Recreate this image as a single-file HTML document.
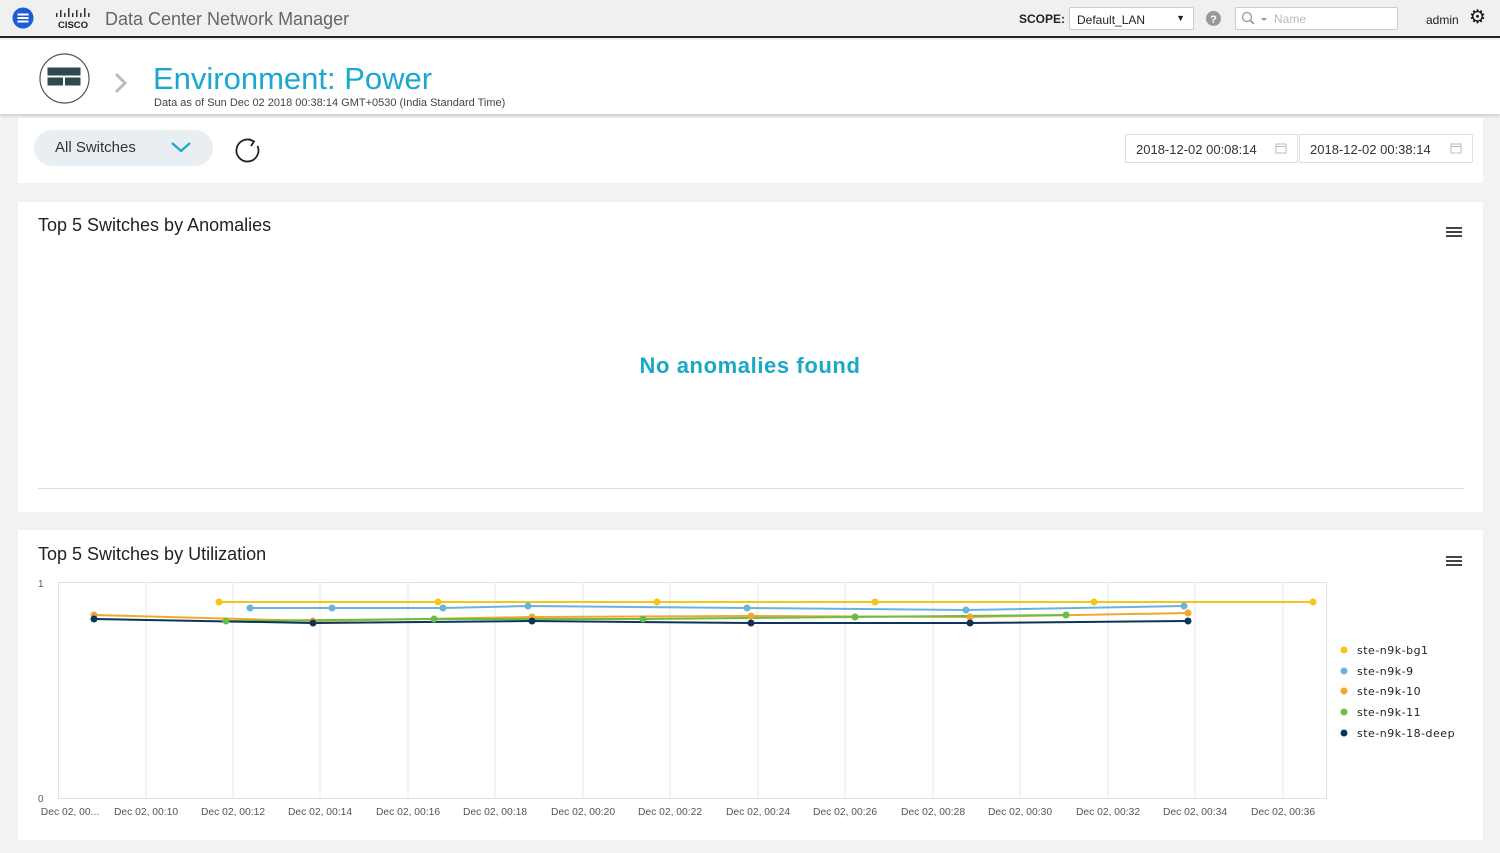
<!DOCTYPE html>
<html><head><meta charset="utf-8"><style>
*{margin:0;padding:0;box-sizing:border-box}
body{width:1500px;height:853px;background:#f2f2f2;font-family:"Liberation Sans",sans-serif;position:relative;overflow:hidden;color:#333}
.a{position:absolute}
.card{position:absolute;background:#fff;left:18px;width:1465px}
</style></head><body>
<div class="a" style="left:0;top:0;width:1500px;height:38px;background:#f0f0f0;border-bottom:2px solid #222"></div>
<svg class="a" style="left:12px;top:7px" width="22" height="22"><circle cx="11" cy="11" r="10.5" fill="#1e5bd6"/><rect x="5.5" y="6.5" width="11" height="2" fill="#fff"/><rect x="5.5" y="10" width="11" height="2" fill="#fff"/><rect x="5.5" y="13.5" width="11" height="2" fill="#fff"/></svg>
<svg class="a" style="left:54px;top:8px" width="40" height="22"><g fill="#333"><rect x="2" y="5" width="1.5" height="4"/><rect x="6" y="2" width="1.5" height="7"/><rect x="10" y="5" width="1.5" height="4"/><rect x="14" y="0" width="1.5" height="9"/><rect x="18" y="5" width="1.5" height="4"/><rect x="22" y="2" width="1.5" height="7"/><rect x="26" y="5" width="1.5" height="4"/><rect x="30" y="0" width="1.5" height="9"/><rect x="34" y="5" width="1.5" height="4"/></g><text x="19" y="20" font-size="9.5" font-weight="bold" text-anchor="middle" fill="#222" font-family="Liberation Sans">CISCO</text></svg>
<div class="a" style="left:105px;top:9px;font-size:18px;color:#666">Data Center Network Manager</div>
<div class="a" style="left:1019px;top:12px;font-size:12px;font-weight:bold;color:#222">SCOPE:</div>
<div class="a" style="left:1069px;top:7px;width:125px;height:23px;background:#fff;border:1px solid #ccc;border-radius:2px;font-size:12px;padding:5px 7px;color:#222">Default_LAN<span style="position:absolute;right:8px;top:5px;font-size:9px">▼</span></div>
<svg class="a" style="left:1206px;top:11px" width="15" height="15"><circle cx="7.5" cy="7.5" r="7.5" fill="#999"/><text x="7.5" y="12" font-size="11" font-weight="bold" fill="#fff" text-anchor="middle" font-family="Liberation Sans">?</text></svg>
<div class="a" style="left:1235px;top:7px;width:163px;height:23px;background:#fff;border:1px solid #ccc;border-radius:2px"></div>
<svg class="a" style="left:1241px;top:11px" width="30" height="15"><circle cx="6" cy="6" r="4.5" fill="none" stroke="#999" stroke-width="1.3"/><line x1="9" y1="9" x2="13" y2="13" stroke="#999" stroke-width="1.8"/><path d="M20 7 L26 7 L23 10 Z" fill="#999"/></svg>
<div class="a" style="left:1274px;top:12px;font-size:12px;color:#bbb">Name</div>
<div class="a" style="left:1426px;top:13px;font-size:12px;color:#222">admin</div>
<div class="a" style="left:1469px;top:6px;font-size:19px;color:#111">⚙</div>
<div class="a" style="left:0;top:40px;width:1500px;height:74px;background:#fff;box-shadow:0 2px 3px rgba(0,0,0,.15)"></div>
<svg class="a" style="left:38px;top:52px" width="53" height="53"><circle cx="26.5" cy="26.5" r="24.5" fill="#fff" stroke="#555" stroke-width="1.2"/><rect x="9.5" y="15.5" width="33" height="8" fill="#2c4a4f"/><rect x="9.5" y="25.5" width="15.5" height="8" fill="#2c4a4f"/><rect x="27" y="25.5" width="15.5" height="8" fill="#2c4a4f"/></svg>
<svg class="a" style="left:113px;top:71px" width="16" height="24"><path d="M3 3 L12 12 L3 21" fill="none" stroke="#bbb" stroke-width="3"/></svg>
<div class="a" style="left:153px;top:61px;font-size:31px;color:#1aa8d0">Environment: Power</div>
<div class="a" style="left:154px;top:97px;font-size:11px;color:#444">Data as of Sun Dec 02 2018 00:38:14 GMT+0530 (India Standard Time)</div>
<div class="card" style="top:118px;height:65px"></div>
<div class="a" style="left:34px;top:130px;width:179px;height:36px;background:#e8eef1;border-radius:18px"></div>
<div class="a" style="left:55px;top:139px;font-size:15px;color:#333">All Switches</div>
<svg class="a" style="left:170px;top:140px" width="22" height="14"><path d="M2 3 L11 11 L20 3" fill="none" stroke="#1aa8d0" stroke-width="2.2"/></svg>
<svg class="a" style="left:233px;top:135px" width="30" height="30"><path d="M20 6 A11 11 0 1 0 24.5 11" fill="none" stroke="#222" stroke-width="1.8"/><path d="M16 4 L21 6.5 L18 11" fill="none" stroke="#222" stroke-width="1.8"/></svg>
<div class="a" style="left:1125px;top:134px;width:173px;height:29px;border:1px solid #ddd;border-radius:2px;font-size:13px;color:#333;padding:7px 10px">2018-12-02 00:08:14</div>
<div class="a" style="left:1299px;top:134px;width:174px;height:29px;border:1px solid #ddd;border-radius:2px;font-size:13px;color:#333;padding:7px 10px">2018-12-02 00:38:14</div>
<svg class="a" style="left:1275px;top:142px" width="12" height="12"><rect x="1" y="2" width="10" height="9" fill="none" stroke="#bbb"/><line x1="1" y1="4.5" x2="11" y2="4.5" stroke="#bbb"/></svg>
<svg class="a" style="left:1450px;top:142px" width="12" height="12"><rect x="1" y="2" width="10" height="9" fill="none" stroke="#bbb"/><line x1="1" y1="4.5" x2="11" y2="4.5" stroke="#bbb"/></svg>
<div class="card" style="top:202px;height:310px"></div>
<div class="a" style="left:38px;top:215px;font-size:18px;color:#222">Top 5 Switches by Anomalies</div>
<svg class="a" style="left:1446px;top:226px" width="16" height="12"><g fill="#444"><rect y="1" width="16" height="2"/><rect y="5" width="16" height="2"/><rect y="9" width="16" height="2"/></g></svg>
<div class="a" style="left:0;width:1500px;top:353px;text-align:center;font-size:22px;font-weight:bold;color:#1aa8c8;letter-spacing:.6px">No anomalies found</div>
<div class="a" style="left:38px;top:488px;width:1426px;height:1px;background:#ddd"></div>
<div class="card" style="top:530px;height:310px"></div>
<div class="a" style="left:38px;top:544px;font-size:18px;color:#222">Top 5 Switches by Utilization</div>
<svg class="a" style="left:1446px;top:555px" width="16" height="12"><g fill="#444"><rect y="1" width="16" height="2"/><rect y="5" width="16" height="2"/><rect y="9" width="16" height="2"/></g></svg>
<svg class="a" style="left:0;top:570px" width="1500" height="260" font-family="Liberation Sans">
<g transform="translate(0,-570)">
<rect x="58.5" y="582.5" width="1268" height="216" fill="#fff" stroke="#dde3ea"/>
<g stroke="#e3e7ec">
<line x1="146" y1="582" x2="146" y2="798"/><line x1="233" y1="582" x2="233" y2="798"/><line x1="320" y1="582" x2="320" y2="798"/><line x1="408" y1="582" x2="408" y2="798"/><line x1="495" y1="582" x2="495" y2="798"/><line x1="583" y1="582" x2="583" y2="798"/><line x1="670" y1="582" x2="670" y2="798"/><line x1="758" y1="582" x2="758" y2="798"/><line x1="845" y1="582" x2="845" y2="798"/><line x1="933" y1="582" x2="933" y2="798"/><line x1="1020" y1="582" x2="1020" y2="798"/><line x1="1108" y1="582" x2="1108" y2="798"/><line x1="1195" y1="582" x2="1195" y2="798"/><line x1="1283" y1="582" x2="1283" y2="798"/>
</g>
<text x="38" y="587" font-size="10" fill="#555">1</text><text x="38" y="802" font-size="10" fill="#555">0</text>
<g font-size="10.3" fill="#555" text-anchor="middle">
<text x="70" y="815">Dec 02, 00...</text><text x="146" y="815">Dec 02, 00:10</text><text x="233" y="815">Dec 02, 00:12</text><text x="320" y="815">Dec 02, 00:14</text><text x="408" y="815">Dec 02, 00:16</text><text x="495" y="815">Dec 02, 00:18</text><text x="583" y="815">Dec 02, 00:20</text><text x="670" y="815">Dec 02, 00:22</text><text x="758" y="815">Dec 02, 00:24</text><text x="845" y="815">Dec 02, 00:26</text><text x="933" y="815">Dec 02, 00:28</text><text x="1020" y="815">Dec 02, 00:30</text><text x="1108" y="815">Dec 02, 00:32</text><text x="1195" y="815">Dec 02, 00:34</text><text x="1283" y="815">Dec 02, 00:36</text>
</g>
<g fill="none" stroke-width="2">
<polyline stroke="#f5c518" points="219,602 438,602 657,602 875,602 1094,602 1313,602"/>
<polyline stroke="#6ab4dc" points="250,608 332,608 443,608 528,606 747,608 966,610 1184,606"/>
<polyline stroke="#f0a830" points="94,615 313,621 532,617 751,616 970,617 1188,613"/>
<polyline stroke="#6cbd45" points="226,621 434,619 643,619 855,617 1066,615"/>
<polyline stroke="#0c3558" points="94,619 313,623 532,621 751,623 970,623 1188,621"/>
</g>
<g fill="#f5c518"><circle cx="219" cy="602" r="3.5"/><circle cx="438" cy="602" r="3.5"/><circle cx="657" cy="602" r="3.5"/><circle cx="875" cy="602" r="3.5"/><circle cx="1094" cy="602" r="3.5"/><circle cx="1313" cy="602" r="3.5"/></g>
<g fill="#6ab4dc"><circle cx="250" cy="608" r="3.5"/><circle cx="332" cy="608" r="3.5"/><circle cx="443" cy="608" r="3.5"/><circle cx="528" cy="606" r="3.5"/><circle cx="747" cy="608" r="3.5"/><circle cx="966" cy="610" r="3.5"/><circle cx="1184" cy="606" r="3.5"/></g>
<g fill="#f0a830"><circle cx="94" cy="615" r="3.5"/><circle cx="313" cy="621" r="3.5"/><circle cx="532" cy="617" r="3.5"/><circle cx="751" cy="616" r="3.5"/><circle cx="970" cy="617" r="3.5"/><circle cx="1188" cy="613" r="3.5"/></g>
<g fill="#6cbd45"><circle cx="226" cy="621" r="3.5"/><circle cx="434" cy="619" r="3.5"/><circle cx="643" cy="619" r="3.5"/><circle cx="855" cy="617" r="3.5"/><circle cx="1066" cy="615" r="3.5"/></g>
<g fill="#0c3558"><circle cx="94" cy="619" r="3.5"/><circle cx="313" cy="623" r="3.5"/><circle cx="532" cy="621" r="3.5"/><circle cx="751" cy="623" r="3.5"/><circle cx="970" cy="623" r="3.5"/><circle cx="1188" cy="621" r="3.5"/></g>
<g font-size="11" fill="#222" font-family="DejaVu Sans" letter-spacing="0.5">
<circle cx="1344" cy="650" r="3.5" fill="#f5c518"/><text x="1357" y="654">ste-n9k-bg1</text>
<circle cx="1344" cy="671" r="3.5" fill="#6ab4dc"/><text x="1357" y="675">ste-n9k-9</text>
<circle cx="1344" cy="691" r="3.5" fill="#f0a830"/><text x="1357" y="695">ste-n9k-10</text>
<circle cx="1344" cy="712" r="3.5" fill="#6cbd45"/><text x="1357" y="716">ste-n9k-11</text>
<circle cx="1344" cy="733" r="3.5" fill="#0c3558"/><text x="1357" y="737">ste-n9k-18-deep</text>
</g>
</g></svg>
</body></html>
